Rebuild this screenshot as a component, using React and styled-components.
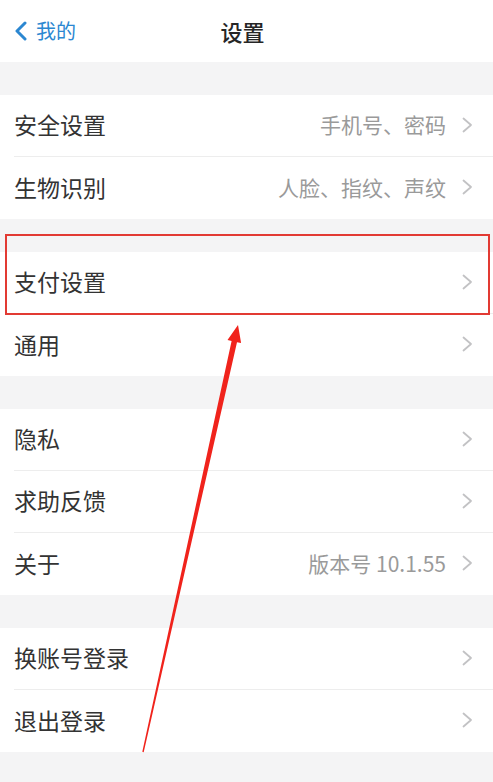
import React from 'react'
import styled, { createGlobalStyle } from 'styled-components'

const Global = createGlobalStyle`
  html, body {
    margin: 0;
    padding: 0;
    background: #f4f4f5;
  }
  * { box-sizing: border-box; }
`

const Page = styled.div`
  position: relative;
  width: 493px;
  height: 782px;
  overflow: hidden;
  background: #f4f4f5;
  font-family: "Noto Sans CJK SC", "Noto Sans", sans-serif;
`

const Header = styled.div`
  position: relative;
  height: 62px;
  padding-right: 8px;
  background: #fff;
  display: flex;
  align-items: center;
  justify-content: center;
`

const Back = styled.div`
  position: absolute;
  left: 14px;
  top: 0;
  height: 62px;
  display: flex;
  align-items: center;
  gap: 8px;
  color: #2b87d1;
  font-size: 20px;
  line-height: 1;
`

const Title = styled.h1`
  margin: 0;
  font-size: 22px;
  font-weight: 500;
  line-height: 1;
  color: #262626;
`

const Group = styled.div`
  margin-top: 33px;
  background: #fff;
`

const Row = styled.div`
  height: 62px;
  margin-left: 14px;
  padding-right: 20px;
  padding-bottom: 2px;
  display: flex;
  align-items: center;
  line-height: 1;
  border-bottom: ${p => (p.last ? 'none' : '1px solid #ededed')};
`

const Label = styled.span`
  flex: 1;
  font-size: 23px;
  color: #333;
`

const Value = styled.span`
  font-size: 21px;
  color: #9a9a9a;
  margin-right: 16px;
`

const Highlight = styled.div`
  position: absolute;
  left: 5px;
  top: 234px;
  width: 485px;
  height: 81px;
  border: 2px solid #e23a33;
  pointer-events: none;
`

const Overlay = styled.svg`
  position: absolute;
  left: 0;
  top: 0;
  pointer-events: none;
`

const Chevron = () => (
  <svg width="11" height="16" viewBox="0 0 11 16">
    <polyline points="1.5,1.5 9,8 1.5,14.5" fill="none" stroke="#c2c2c4" strokeWidth="1.8" strokeLinecap="round" strokeLinejoin="round" />
  </svg>
)

const groups = [
  [
    { label: '安全设置', value: '手机号、密码' },
    { label: '生物识别', value: '人脸、指纹、声纹' },
  ],
  [{ label: '支付设置' }, { label: '通用' }],
  [{ label: '隐私' }, { label: '求助反馈' }, { label: '关于', value: '版本号 10.1.55' }],
  [{ label: '换账号登录' }, { label: '退出登录' }],
]

const App = () => {
  return (
    <Page>
      <Global />
      <Header>
        <Back>
          <svg width="14" height="20" viewBox="0 0 14 20">
            <polyline points="11,2 3,10 11,18" fill="none" stroke="#2b87d1" strokeWidth="3" strokeLinecap="round" strokeLinejoin="round" />
          </svg>
          我的
        </Back>
        <Title>设置</Title>
      </Header>
      {groups.map((rows, gi) => (
        <Group key={gi}>
          {rows.map((r, i) => (
            <Row key={r.label} last={i === rows.length - 1}>
              <Label>{r.label}</Label>
              {r.value && <Value>{r.value}</Value>}
              <Chevron />
            </Row>
          ))}
        </Group>
      ))}
      <Highlight />
      <Overlay width="493" height="782" viewBox="0 0 493 782">
        <polygon
          points="238,325 241.1,343.1 237,342.2 143.7,752.2 142.3,751.8 231.6,341 227.5,340.1"
          fill="#f0231c"
        />
      </Overlay>
    </Page>
  )
}

export default App
